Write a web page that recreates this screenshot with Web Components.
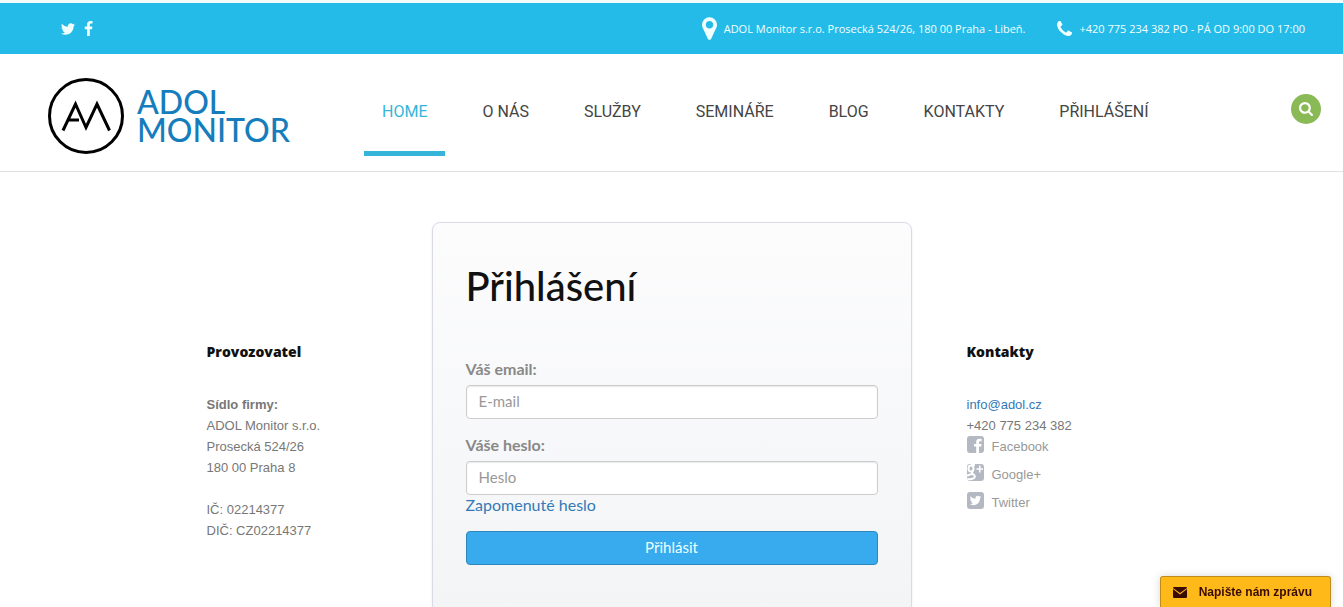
<!DOCTYPE html>
<html lang="cs">
<head>
<meta charset="utf-8">
<meta name="viewport" content="width=device-width, initial-scale=1">
<title>ADOL Monitor - Přihlášení</title>
<style>
  :root {
    --color-brand: #25bbe9;
    --color-link: #337ab7;
    --color-text: #777;
    --font-body: "Lato", "Open Sans", sans-serif;
    --font-nav: "Roboto", sans-serif;
    --font-info: "Liberation Sans", Arial, sans-serif;
    scrollbar-width: none;
  }

  body {
    margin: 0;
    background: #fff;
    color: var(--color-text);
    font-family: var(--font-body);
  }
</style>
</head>
<body>
<adol-page></adol-page>

<script>
const icons = {
  twitter: ["0 0 1792 1792", "M1684 408q-67 98-162 167 1 14 1 42 0 130-38 259.5t-115.5 248.5-184.5 210.5-258 146-323 54.5q-271 0-496-145 35 4 78 4 225 0 401-138-105-2-188-64.5t-114-159.5q33 5 61 5 43 0 85-11-112-23-185.5-111.5t-73.5-205.5v-4q68 38 146 41-66-44-105-115t-39-154q0-88 44-163 121 149 294.5 238.5t371.5 99.5q-8-38-8-74 0-134 94.5-228.5t228.5-94.5q140 0 236 102 109-21 205-78-37 115-142 178 93-10 186-50z"],
  facebook: ["448 0 896 1664", "M1343 12v264h-157q-86 0-116 36t-30 108v189h293l-39 296h-254v759h-306v-759h-255v-296h255v-218q0-186 104-288.5t277-102.5q147 0 228 12z"],
  marker: ["384 128 1024 1536", "M1152 640q0-106-75-181t-181-75-181 75-75 181 75 181 181 75 181-75 75-181zm256 0q0 109-33 179l-364 774q-16 33-47.5 52t-67.5 19-67.5-19-46.5-52l-365-774q-33-70-33-179 0-212 150-362t362-150 362 150 150 362z"],
  phone: ["192 128 1408 1408", "M1600 1240q0 27-10 70.5t-21 68.5q-21 50-122 106-94 51-186 51-27 0-53-3.5t-57.5-12.5-47-14.5-55.5-20.5-49-18q-98-35-175-83-127-79-264-216t-216-264q-48-77-83-175-3-9-18-49t-20.5-55.5-14.5-47-12.5-57.5-3.5-53q0-92 51-186 56-101 106-122 25-11 68.5-21t70.5-10q14 0 21 3 18 6 53 76 11 19 30 54t35 63.5 31 53.5q3 4 17.5 25t21.5 35.5 7 28.5q0 20-28.5 50t-62 55-62 53-28.5 46q0 9 5 22.5t8.5 20.5 14 24 11.5 19q76 137 174 235t235 174q2 1 19 11.5t24 14 20.5 8.5 22.5 5q18 0 46-28.5t53-62 55-62 50-28.5q14 0 28.5 7t35.5 21.5 25 17.5q25 15 53.5 31t63.5 35 54 30q70 35 76 53 3 7 3 21z"],
  search: ["64 128 1664 1664", "M1216 832q0-185-131.5-316.5t-316.5-131.5-316.5 131.5-131.5 316.5 131.5 316.5 316.5 131.5 316.5-131.5 131.5-316.5zm512 832q0 52-38 90t-90 38q-54 0-90-38l-343-342q-179 124-399 124-143 0-273.5-55.5t-225-150-150-225-55.5-273.5 55.5-273.5 150-225 225-150 273.5-55.5 273.5 55.5 225 150 150 225 55.5 273.5q0 220-124 399l343 343q37 37 37 90z"],
  envelope: ["0 0 14 11", "M0 1Q0 0 1 0H13Q14 0 14 1L7 6ZM0 2L7 7.500L14 2V10Q14 11 13 11H1Q0 11 0 10Z"],
};

const badges = {
  facebook: `<path fill="#fff" d="M12 17V10.500H14.200L14.500 8H12V6.500Q12 5.300 13.300 5.300H14.600V3Q9.200 2 9.200 6V8H7V10.500H9.200V17Z"/>`,
  google: `<g fill="none" stroke="#fff"><ellipse cx="4" cy="4.500" rx="2.500" ry="3" stroke-width="2"/><path stroke-width="2" d="M4 1H8M6 7Q4 9 6 10Q9 12 7 14Q4 16 0 15M6 10Q2 10 0 12"/><path stroke-width="1.500" d="M9.500 5H16M12.800 1.500V8.500"/></g>`,
  twitter: `<g transform="translate(2 2) scale(.00725)"><path fill="#fff" d="${icons.twitter[1]}"/></g>`,
};

function define(name, html, setup) {
  const template = document.createElement("template");
  template.innerHTML = html;

  customElements.define(name, class extends HTMLElement {
    constructor() {
      super();
      this.attachShadow({ mode: "open" }).append(template.content.cloneNode(true));
    }

    connectedCallback() {
      if (setup) setup(this, this.shadowRoot);
    }
  });
}

define("adol-icon", `
  <style>
    :host { display: inline-flex; flex: none; }
    svg { display: block; width: 100%; height: 100%; fill: currentColor; }
  </style>
  <svg aria-hidden="true"><path/></svg>
`, (host, root) => {
  const [viewBox, d] = icons[host.getAttribute("name")];
  root.querySelector("svg").setAttribute("viewBox", viewBox);
  root.querySelector("path").setAttribute("d", d);
});

define("adol-topbar", `
  <style>
    :host {
      display: flex;
      align-items: center;
      justify-content: space-between;
      box-sizing: border-box;
      min-height: 54px;
      padding: 0 38px 0 60px;
      border-top: 3px solid #f3fbfd;
      background: var(--color-brand);
      color: #f2ffff;
      font-family: "Open Sans", sans-serif;
      font-size: 11px;
      line-height: 20px;
    }
    div { display: flex; align-items: center; }
    .social { gap: 8px; }
    .social a { display: flex; color: inherit; }
    .info { gap: 32px; }
    .place, .call { gap: 7px; }
    .tw { width: 16px; height: 16px; }
    .fb { width: 9px; height: 15px; }
    .pin { width: 15px; height: 23px; }
    .tel { width: 15px; height: 15px; }
  </style>
  <div class="social">
    <a href="#" aria-label="Twitter"><adol-icon class="tw" name="twitter"></adol-icon></a>
    <a href="#" aria-label="Facebook"><adol-icon class="fb" name="facebook"></adol-icon></a>
  </div>
  <div class="info">
    <div class="place">
      <adol-icon class="pin" name="marker"></adol-icon>
      <span>ADOL Monitor s.r.o. Prosecká 524/26, 180 00 Praha - Libeň.</span>
    </div>
    <div class="call">
      <adol-icon class="tel" name="phone"></adol-icon>
      <span>+420 775 234 382 PO - PÁ OD 9:00 DO 17:00</span>
    </div>
  </div>
`);

define("adol-logo", `
  <style>
    :host { display: block; }
    a {
      display: flex;
      align-items: center;
      gap: 13px;
      color: #167dbd;
      font-size: 32px;
      font-weight: 500;
      line-height: 28px;
      text-decoration: none;
    }
    svg { flex: none; }
    /* one word per line */
    span { width: min-content; }
  </style>
  <a href="#">
    <svg width="76" height="76" viewBox="0 0 76 76" fill="none" stroke="#000" aria-hidden="true">
      <circle cx="38" cy="38" r="36.500" stroke-width="3"/>
      <path stroke-width="3" stroke-miterlimit="10" d="M15 52.500L27.500 26L38 49.500L49 26L61.500 52.500M21 42H31"/>
    </svg>
    <span>ADOL MONITOR</span>
  </a>
`);

define("adol-nav-link", `
  <style>
    :host { display: block; }
    a {
      display: block;
      padding: 48px 18px 29px;
      border-bottom: 5px solid transparent;
      color: #444;
      font-family: var(--font-nav);
      font-size: 16px;
      line-height: 20px;
      text-decoration: none;
      white-space: nowrap;
    }
    :host([active]) a { border-color: #35b5d9; color: #35b5d9; }
  </style>
  <a href="#"><slot></slot></a>
`);

define("adol-header", `
  <style>
    :host {
      display: flex;
      align-items: flex-start;
      box-sizing: border-box;
      min-height: 118px;
      padding: 0 22px 0 48px;
      border-bottom: 1px solid #e1e1e1;
    }
    adol-logo { flex: 0 0 316px; padding-top: 24px; }
    nav { display: flex; gap: 19px; }
    button {
      display: flex;
      align-items: center;
      justify-content: center;
      width: 30px;
      height: 30px;
      margin: 40px 0 0 auto;
      padding: 0;
      border: 0;
      border-radius: 50%;
      background: #8aba56;
      color: #fff;
    }
    button adol-icon { width: 14px; height: 14px; }
  </style>
  <adol-logo></adol-logo>
  <nav>
    <adol-nav-link active>HOME</adol-nav-link>
    <adol-nav-link>O NÁS</adol-nav-link>
    <adol-nav-link>SLUŽBY</adol-nav-link>
    <adol-nav-link>SEMINÁŘE</adol-nav-link>
    <adol-nav-link>BLOG</adol-nav-link>
    <adol-nav-link>KONTAKTY</adol-nav-link>
    <adol-nav-link>PŘIHLÁŠENÍ</adol-nav-link>
  </nav>
  <button type="button" aria-label="Hledat"><adol-icon name="search"></adol-icon></button>
`);

define("adol-field", `
  <style>
    :host { display: block; }
    label {
      display: block;
      margin-bottom: 7px;
      color: #888;
      font-size: 16px;
      font-weight: 700;
      line-height: 18px;
    }
    input {
      display: block;
      box-sizing: border-box;
      width: 100%;
      height: 34px;
      padding: 5px 12px 7px;
      border: 1px solid #ccc;
      border-radius: 4px;
      background: #fff;
      box-shadow: inset 0 1px 1px rgba(0, 0, 0, .08);
      color: #555;
      font-family: inherit;
      font-size: 15px;
      line-height: 20px;
    }
    input::placeholder { color: #999; opacity: 1; }
  </style>
  <label for="field"></label>
  <input id="field">
`, (host, root) => {
  root.querySelector("label").textContent = host.getAttribute("label");
  const input = root.querySelector("input");
  input.type = host.getAttribute("type");
  input.placeholder = host.getAttribute("placeholder");
});

define("adol-login", `
  <style>
    :host {
      display: block;
      box-sizing: border-box;
      padding: 43px 33px 60px;
      border: 1px solid #d8dae5;
      border-radius: 8px;
      background: linear-gradient(#fcfcfd, #f3f4f6);
      box-shadow: 0 1px 3px rgba(0, 0, 0, .08);
    }
    h1 {
      margin: 0 0 54px;
      color: #111;
      font-size: 40px;
      font-weight: 500;
      line-height: 40px;
    }
    adol-field + adol-field { margin-top: 17px; }
    a {
      display: block;
      width: fit-content;
      color: var(--color-link);
      font-size: 16px;
      line-height: 20px;
      text-decoration: none;
    }
    button {
      display: block;
      box-sizing: border-box;
      width: 100%;
      height: 34px;
      margin-top: 16px;
      padding: 0 12px 2px;
      border: 1px solid #2e86bd;
      border-radius: 4px;
      background: #38abee;
      color: #edffff;
      font-family: inherit;
      font-size: 15px;
      line-height: 20px;
    }
  </style>
  <form>
    <h1>Přihlášení</h1>
    <adol-field label="Váš email:" type="email" placeholder="E-mail"></adol-field>
    <adol-field label="Váše heslo:" type="password" placeholder="Heslo"></adol-field>
    <a href="#">Zapomenuté heslo</a>
    <button type="button">Přihlásit</button>
  </form>
`);

define("adol-info", `
  <style>
    :host {
      display: block;
      margin-top: 119px;
      font-family: var(--font-info);
      font-size: 13px;
      line-height: 21px;
    }
    h2 {
      margin: 0 0 31px;
      color: #111;
      font-family: "Open Sans", sans-serif;
      font-size: 14px;
      font-weight: 800;
      line-height: 22px;
    }
  </style>
  <h2></h2>
  <slot></slot>
`, (host, root) => {
  root.querySelector("h2").textContent = host.getAttribute("heading");
});

define("adol-social", `
  <style>
    :host { display: block; height: 28px; }
    a {
      display: flex;
      align-items: flex-start;
      gap: 8px;
      color: #999;
      text-decoration: none;
    }
    svg { flex: none; border-radius: 3px; background: #b4b8c2; }
  </style>
  <a href="#"><svg width="17" height="17" viewBox="0 0 17 17" aria-hidden="true"></svg><slot></slot></a>
`, (host, root) => {
  root.querySelector("svg").innerHTML = badges[host.getAttribute("name")];
});

define("adol-message", `
  <style>
    :host { position: fixed; right: 12px; bottom: 0; }
    button {
      display: flex;
      align-items: center;
      gap: 12px;
      box-sizing: border-box;
      height: 31px;
      padding: 0 18px 0 12px;
      border: 1px solid #bd8d1c;
      border-bottom: 0;
      border-radius: 3px 3px 0 0;
      background: #ffba19;
      box-shadow: 0 0 8px rgba(0, 0, 0, .16);
      color: #3a0b05;
      font-family: var(--font-info);
      font-size: 12px;
      font-weight: 700;
      line-height: 20px;
    }
    adol-icon { width: 14px; height: 11px; }
  </style>
  <button type="button"><adol-icon name="envelope"></adol-icon><span>Napište nám zprávu</span></button>
`);

define("adol-page", `
  <style>
    :host { display: block; }
    main {
      display: grid;
      grid-template-columns: 1fr 480px 1fr;
      align-items: start;
      max-width: 930px;
      margin: 50px auto 0;
    }
    .contacts { padding-left: 55px; }
    p { margin: 0 0 21px; white-space: nowrap; }
    .contacts p { margin: 0; }
    p a { color: var(--color-link); text-decoration: none; }
  </style>
  <adol-topbar></adol-topbar>
  <adol-header></adol-header>
  <main>
    <adol-info heading="Provozovatel">
      <p><strong>Sídlo firmy:</strong><br>ADOL Monitor s.r.o.<br>Prosecká 524/26<br>180 00 Praha 8</p>
      <p>IČ: 02214377<br>DIČ: CZ02214377</p>
    </adol-info>
    <adol-login></adol-login>
    <adol-info class="contacts" heading="Kontakty">
      <p><a href="mailto:info@adol.cz">info@adol.cz</a><br>+420 775 234 382</p>
      <adol-social name="facebook">Facebook</adol-social>
      <adol-social name="google">Google+</adol-social>
      <adol-social name="twitter">Twitter</adol-social>
    </adol-info>
  </main>
  <adol-message></adol-message>
`);
</script>
</body>
</html>
